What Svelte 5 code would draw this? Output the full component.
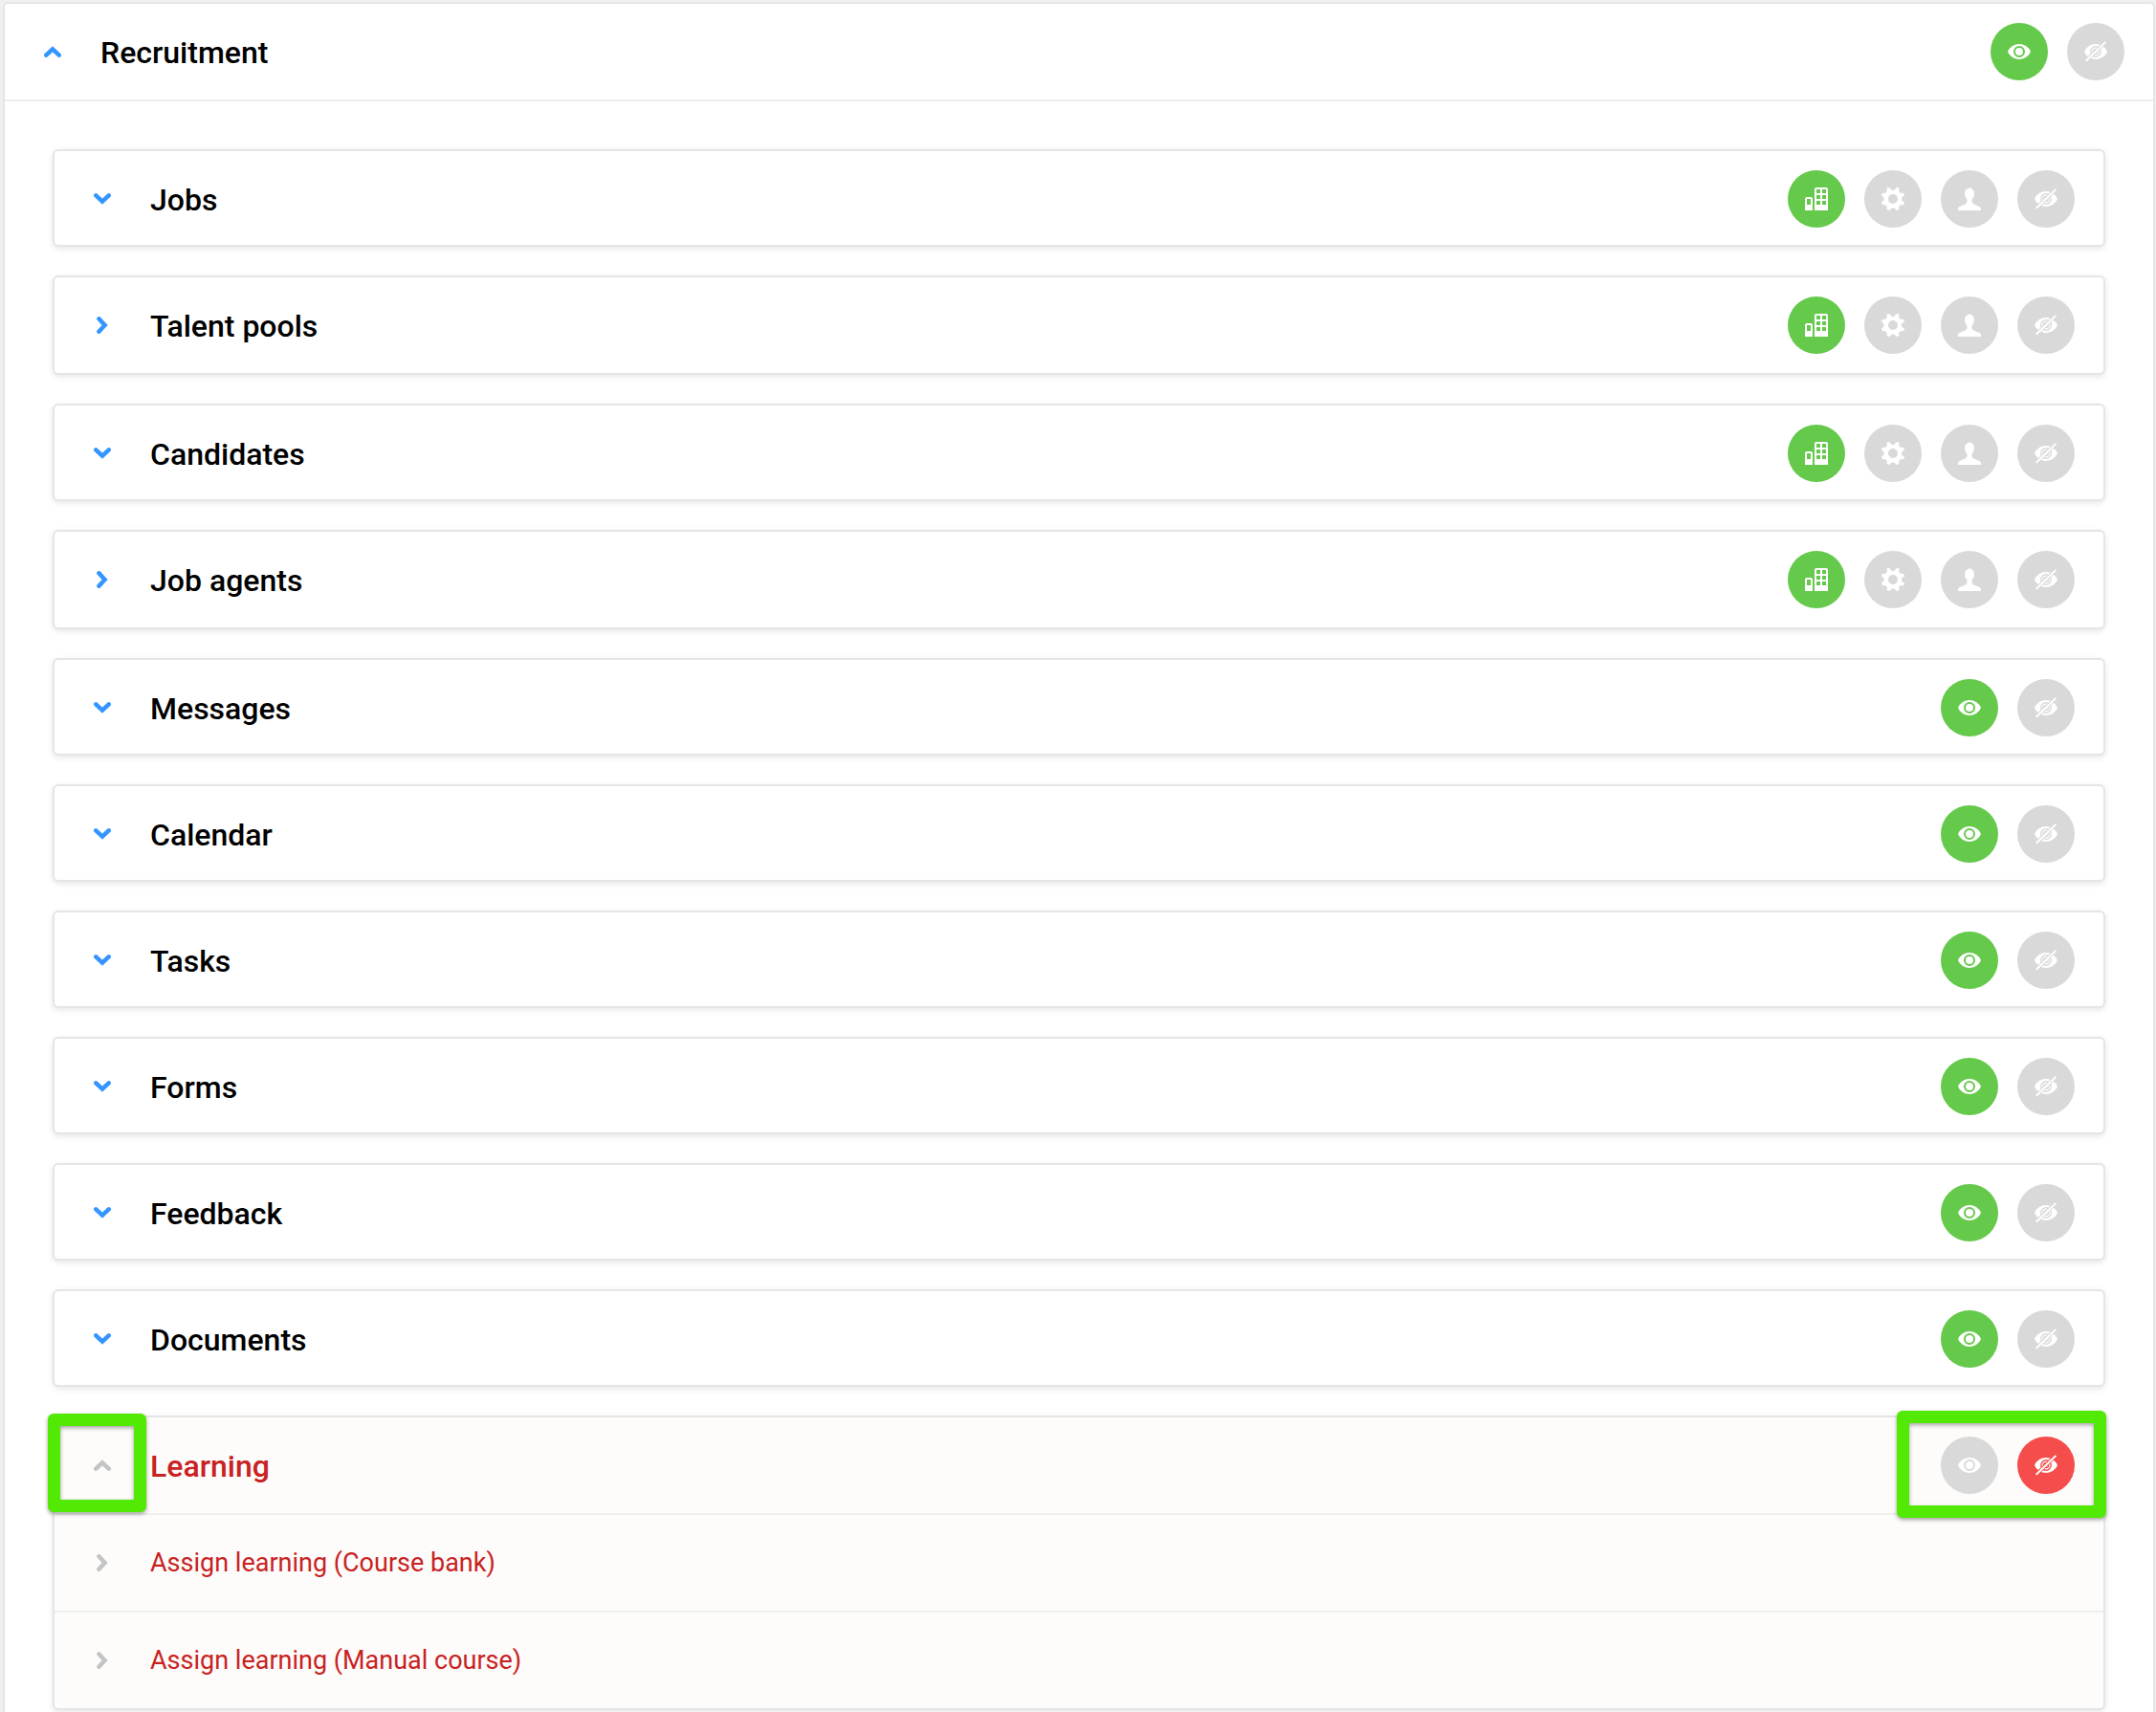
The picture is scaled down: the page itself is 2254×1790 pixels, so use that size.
<script lang="ts">
    type Level = 'company' | 'department' | 'own' | 'view' | 'hidden';
    type Arrow = 'up' | 'down' | 'right';

    interface Section {
        name: string;
        arrow: Arrow;
        levels: Level[];
        active: Level;
        children?: string[];
        highlighted?: boolean;
    }

    const scoped: Level[] = ['company', 'department', 'own', 'hidden'];
    const simple: Level[] = ['view', 'hidden'];

    const labels: Record<Level, string> = {
        company: 'Company',
        department: 'Department',
        own: 'Own',
        view: 'Visible',
        hidden: 'Hidden'
    };

    let root: Section = $state({ name: 'Recruitment', arrow: 'up', levels: simple, active: 'view' });

    let sections: Section[] = $state([
        { name: 'Jobs', arrow: 'down', levels: scoped, active: 'company' },
        { name: 'Talent pools', arrow: 'right', levels: scoped, active: 'company' },
        { name: 'Candidates', arrow: 'down', levels: scoped, active: 'company' },
        { name: 'Job agents', arrow: 'right', levels: scoped, active: 'company' },
        { name: 'Messages', arrow: 'down', levels: simple, active: 'view' },
        { name: 'Calendar', arrow: 'down', levels: simple, active: 'view' },
        { name: 'Tasks', arrow: 'down', levels: simple, active: 'view' },
        { name: 'Forms', arrow: 'down', levels: simple, active: 'view' },
        { name: 'Feedback', arrow: 'down', levels: simple, active: 'view' },
        { name: 'Documents', arrow: 'down', levels: simple, active: 'view' },
        {
            name: 'Learning',
            arrow: 'up',
            levels: simple,
            active: 'hidden',
            children: ['Assign learning (Course bank)', 'Assign learning (Manual course)'],
            highlighted: true
        }
    ]);
</script>

{#snippet chevron(arrow: Arrow)}
    <svg class="chevron {arrow}" viewBox="0 0 18 18" aria-hidden="true">
        <path d="M2.3 5.400 L9 11.600 L15.700 5.400" />
    </svg>
{/snippet}

{#snippet icon(level: Level)}
    <svg class="icon" viewBox="0 0 24 24" aria-hidden="true">
        {#if level === 'company'}
            <path
                fill-rule="evenodd"
                d="M0 24V12Q0 10 2 10H6Q8 10 8 12V24ZM2 12V18H6V12ZM10 24V2Q10 0 12 0H22Q24 0 24 2V24ZM12 2V6H16V2ZM18 2V6H22V2ZM12 8V12H16V8ZM18 8V12H22V8ZM12 14V18H16V14ZM18 14V18H22V14Z"
            />
        {:else if level === 'department'}
            <path
                fill-rule="evenodd"
                d="M6.4 0L9 .4Q9.500 3 12 3Q14.500 3 15 .4L17.600 0L18.600 1Q17.300 3.300 19 5Q20.700 6.700 23 5.400L24 8.800Q21 9.300 21 12Q21 14.700 24 15.200L23 18.600Q20.700 17.300 19 19Q17.300 20.700 18.600 23L15.200 24Q14.700 21.600 12 21.600Q9.300 21.600 8.800 24L5.400 23Q6.700 20.700 5 19Q3.300 17.300 1 18.600L0 15.200Q2.600 14.700 2.600 12Q2.600 9.300 0 8.800L1 5.400Q3.300 6.700 5 5Q6.700 3.300 5.400 1ZM12 7A5 5 0 1 0 12 17A5 5 0 1 0 12 7Z"
            />
        {:else if level === 'own'}
            <path
                d="M0 24V22.200Q0 20.800 1.600 20L7 17.800Q9.800 16.500 9.600 13L8.200 10.500Q7 9.500 7.200 7.300Q6.800 1.600 10.500 1.200L12.600 0L14 1.200Q17.200 2 16.800 7.300Q17 9.500 15.800 10.500L14.400 13Q14.200 16.500 17 17.800L22.400 20Q24 20.800 24 22.200V24Z"
            />
        {:else}
            <path d="M0 12Q1.200 8.500 5 6Q8.200 4 12 4Q15.800 4 19 6Q22.800 8.500 24 12Q22.800 15.500 19 18Q15.800 20 12 20Q8.200 20 5 18Q1.200 15.500 0 12Z" />
            {#if level === 'view'}
                <circle class="cut" cx="12" cy="12" r="5" stroke-width="2" />
            {:else}
                <circle class="cut" cx="12" cy="12" r="5.200" stroke-width="1.400" />
                <circle class="cut" cx="12" cy="12" r="2.700" stroke-width="1.200" />
                <path class="cut" d="M3 20.300L21.500 2.500" stroke-width="3.800" />
                <path class="slash" d="M1.700 21.800L22.400 1.900" />
            {/if}
        {/if}
    </svg>
{/snippet}

{#snippet header(section: Section)}
    <header class="row">
        <button type="button" class="expand" aria-label="Toggle {section.name}">
            {@render chevron(section.arrow)}
        </button>
        <h2>{section.name}</h2>
        <div class="levels">
            {#each section.levels as level}
                <button
                    type="button"
                    class="level"
                    class:on={section.active === level}
                    class:off={section.active === level && level === 'hidden'}
                    aria-label="{section.name}: {labels[level]}"
                    aria-pressed={section.active === level}
                    onclick={() => (section.active = level)}
                >
                    {@render icon(level)}
                </button>
            {/each}
        </div>
        {#if section.highlighted}
            <span class="marker marker-expand"></span>
            <span class="marker marker-levels"></span>
        {/if}
    </header>
{/snippet}

<main class="panel">
    {@render header(root)}
    <div class="sections">
        {#each sections as section}
            <section
                class="card"
                class:leaf={section.arrow === 'down'}
                class:denied={section.active === 'hidden'}
            >
                {@render header(section)}
                {#each section.children ?? [] as child}
                    <div class="row child">
                        <button type="button" class="expand" aria-label="Toggle {child}">
                            {@render chevron('right')}
                        </button>
                        <h3>{child}</h3>
                    </div>
                {/each}
            </section>
        {/each}
    </div>
</main>

<style>
    :global(body) {
        background: #f0f0f0;
    }

    .panel {
        margin: 2px 1px 0 3px;
        padding-bottom: 2px;
        border: 2px solid #e5e5e5;
        border-bottom: 0;
        border-radius: 6px 6px 0 0;
        background: #fff;
        color: #000;
        font-family: Roboto, 'Liberation Sans', sans-serif;
    }

    .panel > .row {
        border-bottom: 2px solid #eee;
    }

    .sections {
        display: flex;
        flex-direction: column;
        gap: 30px;
        padding: 50px 50px 0;
    }

    .card {
        border: 2px solid #e5e5e5;
        border-radius: 6px;
        background: #fff;
        box-shadow: 0 2px 6px rgba(0, 0, 0, 0.1);
    }

    .row {
        position: relative;
        display: flex;
        align-items: center;
        box-sizing: border-box;
        min-height: 100px;
        padding-right: 30px;
    }

    .panel > .row {
        min-height: 102px;
    }

    .leaf .row {
        min-height: 98px;
        padding-top: 2px;
    }

    .child {
        min-height: 102px;
        border-top: 2px solid #eee;
    }

    h2,
    h3 {
        flex: 1;
        margin: 0;
        line-height: 40px;
    }

    h2 {
        padding-top: 2px;
        font-size: 32px;
        font-weight: 500;
    }

    h3 {
        font-size: 27px;
        font-weight: 400;
    }

    button {
        display: flex;
        align-items: center;
        justify-content: center;
        padding: 0;
        border: 0;
        background: none;
        cursor: pointer;
    }

    .expand {
        width: 100px;
        height: 60px;
        color: #3395ff;
    }

    .chevron {
        width: 18px;
        height: 18px;
        fill: none;
        stroke: currentColor;
        stroke-width: 4.5;
        stroke-linecap: round;
    }

    .up {
        transform: rotate(180deg);
    }

    .right {
        transform: rotate(-90deg);
    }

    .levels {
        display: flex;
        gap: 20px;
    }

    .level {
        --fill: #d9d9d9;
        width: 60px;
        height: 60px;
        border-radius: 50%;
        background: var(--fill);
    }

    .level.on {
        --fill: #65c94b;
    }

    .level.off {
        --fill: #f54c4c;
    }

    .icon {
        width: 24px;
        height: 24px;
        fill: #fff;
    }

    .cut {
        fill: none;
        stroke: var(--fill);
    }

    .slash {
        stroke: #fff;
        stroke-width: 2;
    }

    .denied {
        background: #fdfcfb;
        color: #c92222;
    }

    .denied .expand {
        color: #c4c4c4;
    }

    .marker {
        position: absolute;
        z-index: 1;
        box-sizing: border-box;
        border-radius: 6px;
        pointer-events: none;
        border: 13px solid #52ea04;
        filter: drop-shadow(0 2px 2px rgba(0, 0, 0, 0.35));
    }

    .marker-expand {
        top: -4px;
        left: -7px;
        width: 103px;
        height: 103px;
    }

    .marker-levels {
        top: -7px;
        right: -3px;
        width: 219px;
        height: 112px;
    }
</style>
